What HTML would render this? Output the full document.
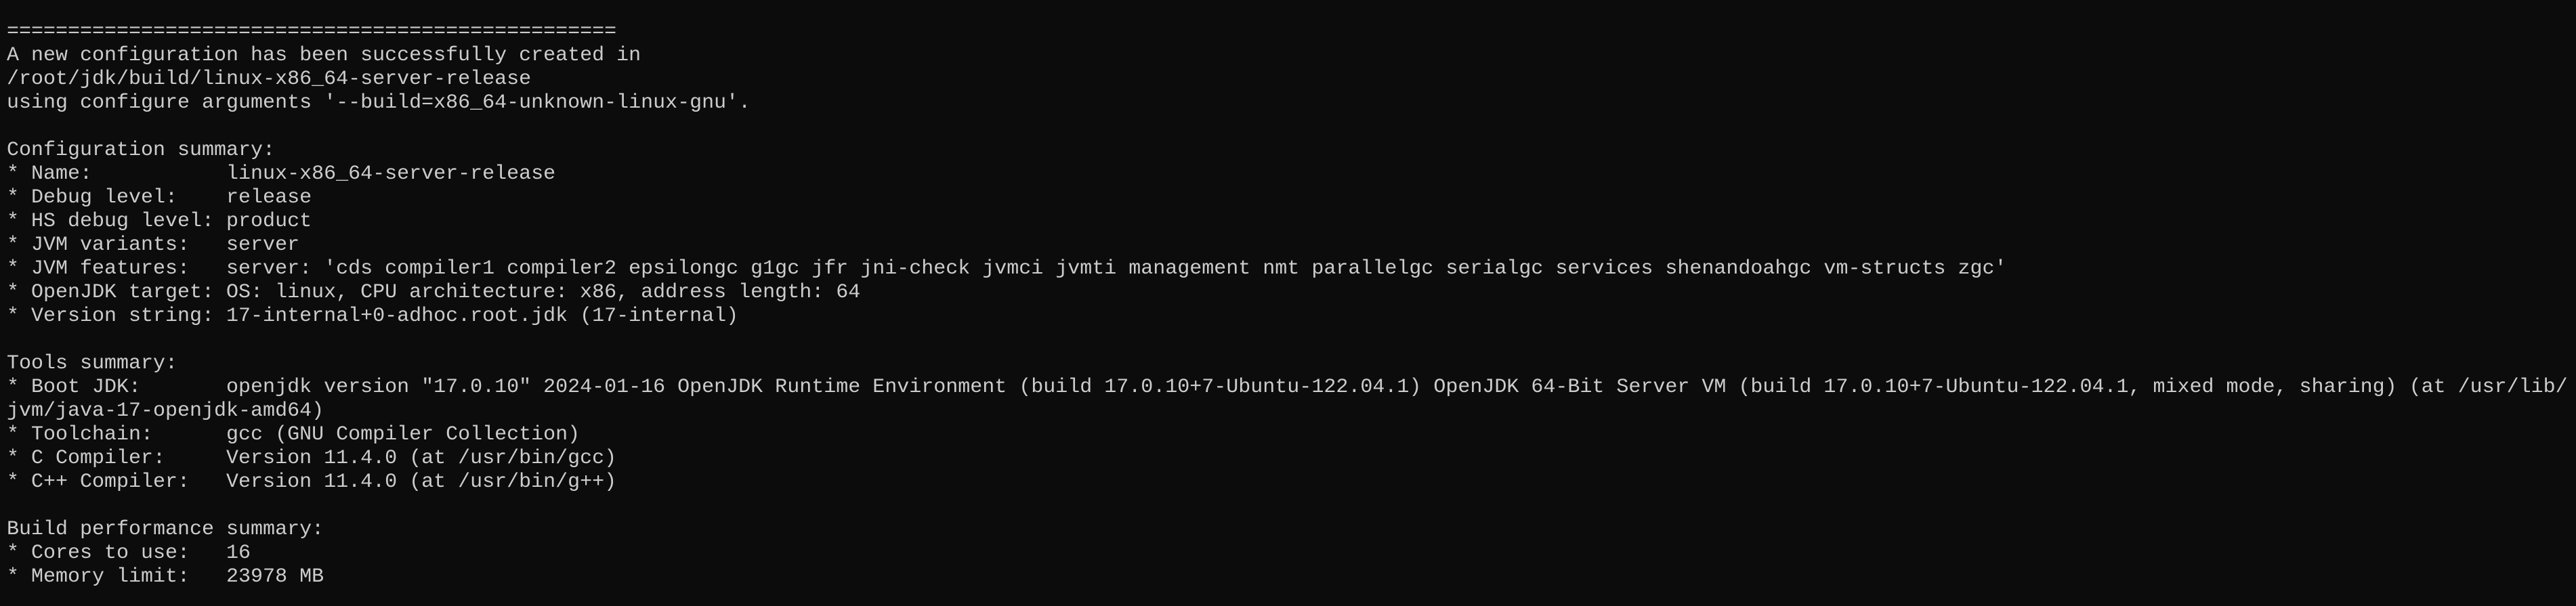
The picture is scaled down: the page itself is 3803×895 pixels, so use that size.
<!DOCTYPE html>
<html><head><meta charset="utf-8"><style>
html,body{margin:0;padding:0;background:#0c0c0c;}
body{width:3803px;height:895px;overflow:hidden;position:relative;}
pre{position:absolute;left:10px;top:30px;margin:0;font-family:"Liberation Mono",monospace;font-size:30px;line-height:35px;color:#cccccc;white-space:pre;}
</style></head><body><pre>==================================================
A new configuration has been successfully created in
/root/jdk/build/linux-x86_64-server-release
using configure arguments '--build=x86_64-unknown-linux-gnu'.

Configuration summary:
* Name:           linux-x86_64-server-release
* Debug level:    release
* HS debug level: product
* JVM variants:   server
* JVM features:   server: 'cds compiler1 compiler2 epsilongc g1gc jfr jni-check jvmci jvmti management nmt parallelgc serialgc services shenandoahgc vm-structs zgc'
* OpenJDK target: OS: linux, CPU architecture: x86, address length: 64
* Version string: 17-internal+0-adhoc.root.jdk (17-internal)

Tools summary:
* Boot JDK:       openjdk version "17.0.10" 2024-01-16 OpenJDK Runtime Environment (build 17.0.10+7-Ubuntu-122.04.1) OpenJDK 64-Bit Server VM (build 17.0.10+7-Ubuntu-122.04.1, mixed mode, sharing) (at /usr/lib/
jvm/java-17-openjdk-amd64)
* Toolchain:      gcc (GNU Compiler Collection)
* C Compiler:     Version 11.4.0 (at /usr/bin/gcc)
* C++ Compiler:   Version 11.4.0 (at /usr/bin/g++)

Build performance summary:
* Cores to use:   16
* Memory limit:   23978 MB</pre></body></html>
